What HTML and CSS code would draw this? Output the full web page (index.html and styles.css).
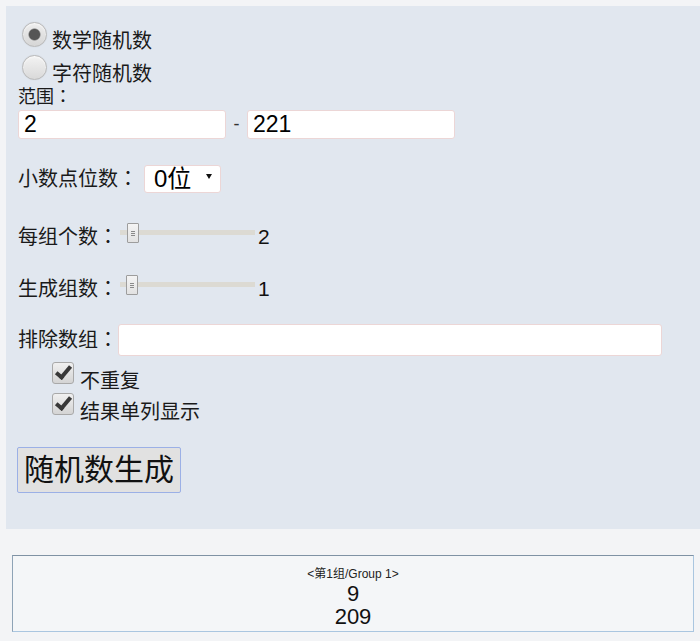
FILE: index.html
```html
<!DOCTYPE html>
<html lang="zh">
<head>
<meta charset="utf-8">
<title>随机数生成</title>
<link rel="stylesheet" href="styles.css">
</head>
<body>
<div class="panel">
  <label class="radio-row"><input type="radio" name="kind" checked><span>数学随机数</span></label>
  <label class="radio-row"><input type="radio" name="kind"><span>字符随机数</span></label>
  <div class="range-label">范围<span class="colon" lang="zh-Hant">：</span></div>
  <div class="range-row">
    <input class="text-in" type="text" value="2">
    <span class="dash">-</span>
    <input class="text-in" type="text" value="221">
  </div>
  <div class="row select-row">
    <span class="lbl">小数点位数<span class="colon" lang="zh-Hant">：</span></span>
    <span class="sel"><select><option>0位</option></select></span>
  </div>
  <div class="row slider-row first">
    <span class="lbl">每组个数<span class="colon" lang="zh-Hant">：</span></span>
    <input class="slider" type="range" min="1" max="100" value="2">
    <span class="val">2</span>
  </div>
  <div class="row slider-row">
    <span class="lbl">生成组数<span class="colon" lang="zh-Hant">：</span></span>
    <input class="slider" type="range" min="1" max="100" value="1">
    <span class="val">1</span>
  </div>
  <div class="row excl-row">
    <span class="lbl">排除数组<span class="colon" lang="zh-Hant">：</span></span>
    <input class="text-in wide" type="text" value="">
  </div>
  <label class="check-row first-check"><input type="checkbox" checked><span>不重复</span></label>
  <label class="check-row"><input type="checkbox" checked><span>结果单列显示</span></label>
  <button class="gen" type="button">随机数生成</button>
</div>
<div class="result">
  <div class="title">&lt;第1组/Group 1&gt;</div>
  <div class="num">9</div>
  <div class="num">209</div>
</div>
</body>
</html>
```

FILE: styles.css
```css
html, body {
  margin: 0;
  background: #f3f4f6;
}
body {
  padding: 6px 0 0 6px;
  font-family: "Liberation Sans", "Noto Sans CJK SC", sans-serif;
  color: #1a1a1a;
}
.panel {
  background: #e1e7ef;
  padding: 14px 0 36px 12px;
}
.colon {
  font-family: "Noto Sans CJK TC", "Noto Sans CJK SC", sans-serif;
  line-height: 1;
}
.radio-row {
  display: flex;
  align-items: flex-end;
  height: 33px;
  font-size: 20px;
  line-height: 24px;
}
.radio-row input {
  -webkit-appearance: none;
  appearance: none;
  width: 25px;
  height: 25px;
  margin: 0 5px 6px 4px;
  border-radius: 50%;
  border: 1px solid #b9b9b9;
  background: linear-gradient(#f3f3f3, #d9d9d9);
  box-shadow: inset 0 1px 2px rgba(255,255,255,0.8), 0 0 1px rgba(0,0,0,0.15);
  box-sizing: border-box;
}
.radio-row input:checked {
  background: radial-gradient(circle, #555 0, #555 5px, #7a7a7a 5.5px, transparent 6.5px), linear-gradient(#eeeeee, #d6d6d6);
}
.range-label {
  height: 22px;
  font-size: 18px;
  line-height: 22px;
}
.range-row {
  display: flex;
  align-items: center;
  margin-top: 2px;
}
.text-in {
  box-sizing: border-box;
  width: 208px;
  height: 29px;
  margin: 0;
  padding: 0 5px;
  border: 1px solid #ecd6d6;
  border-radius: 3px;
  background: #fff;
  font-family: "Liberation Sans", "Noto Sans CJK SC", sans-serif;
  font-size: 23px;
  color: #000;
  outline: none;
}
.dash {
  width: 21px;
  text-align: center;
  font-size: 18px;
  color: #333;
}
.row {
  display: flex;
  align-items: center;
  height: 28px;
  font-size: 20px;
  line-height: 28px;
}
.select-row {
  margin-top: 26px;
}
.select-row .lbl {
  margin-right: 6px;
}
.sel {
  position: relative;
  display: inline-block;
}
.sel select {
  -webkit-appearance: none;
  appearance: none;
  box-sizing: border-box;
  width: 77px;
  height: 28px;
  margin: 0;
  padding: 0 0 0 9px;
  border: 1px solid #ecd6d6;
  border-radius: 3px;
  background: #fff;
  font-family: "Liberation Sans", "Noto Sans CJK SC", sans-serif;
  font-size: 24px;
  line-height: 26px;
  color: #000;
}
.sel::after {
  content: "";
  position: absolute;
  right: 9px;
  top: 9px;
  border-left: 3px solid transparent;
  border-right: 3px solid transparent;
  border-top: 5px solid #111;
}
.slider-row.first {
  margin-top: 30px;
}
.slider-row {
  margin-top: 24px;
}
.slider {
  -webkit-appearance: none;
  appearance: none;
  box-sizing: border-box;
  width: 135px;
  height: 20px;
  margin: 0 3px 9px 2px;
  padding: 0 0 0 6px;
  background: linear-gradient(transparent 7px, #dcdad3 7px, #dcdad3 12px, transparent 12px);
}
.slider::-webkit-slider-runnable-track {
  height: 20px;
  background: transparent;
}
.slider::-webkit-slider-thumb {
  -webkit-appearance: none;
  width: 12px;
  height: 20px;
  box-sizing: border-box;
  border: 1px solid #9d9d9d;
  border-radius: 1px;
  background:
    linear-gradient(#8a8a8a, #8a8a8a) 3px 7px / 4px 1px no-repeat,
    linear-gradient(#8a8a8a, #8a8a8a) 3px 9px / 4px 1px no-repeat,
    linear-gradient(#8a8a8a, #8a8a8a) 3px 11px / 4px 1px no-repeat,
    linear-gradient(#f4f4f4, #e2e2e2);
}
.val {
  font-size: 21px;
  color: #111;
}
.excl-row {
  height: 32px;
  margin-top: 21px;
}
.text-in.wide {
  width: 544px;
  height: 32px;
}
.check-row {
  display: flex;
  align-items: flex-end;
  height: 31px;
  margin-left: 34px;
  font-size: 20px;
  line-height: 22px;
}
.check-row.first-check {
  margin-top: 5px;
}
.check-row input {
  -webkit-appearance: none;
  appearance: none;
  position: relative;
  width: 22px;
  height: 22px;
  margin: 0 6px 8px 0;
  box-sizing: border-box;
  border: 1px solid #a9a9a9;
  border-radius: 3px;
  background: linear-gradient(#f0f0f0, #d4d4d4);
}
.check-row input:checked::after {
  content: "";
  position: absolute;
  left: 6px;
  top: 0px;
  width: 5px;
  height: 12px;
  border-right: 4px solid #383838;
  border-bottom: 4px solid #383838;
  transform: rotate(40deg);
}
.gen {
  display: block;
  box-sizing: border-box;
  height: 46px;
  margin: 24px 0 0 -1px;
  padding: 0 6px;
  border: 1px solid #9bb0e6;
  border-radius: 2px;
  background: #e1e1e1;
  font-family: "Liberation Sans", "Noto Sans CJK SC", sans-serif;
  font-size: 30px;
  line-height: 42px;
  color: #111;
}
.result {
  margin: 26px 6px 0 6px;
  padding: 10px 0 3px;
  border: 1px solid;
  border-color: #7f92a4 #aac6e0 #aac6e0 #8ea3b6;
  background: #f4f6f8;
  text-align: center;
}
.title {
  font-size: 12px;
  line-height: 16px;
  color: #222;
}
.num {
  font-size: 22px;
  line-height: 23px;
  color: #111;
}
```
